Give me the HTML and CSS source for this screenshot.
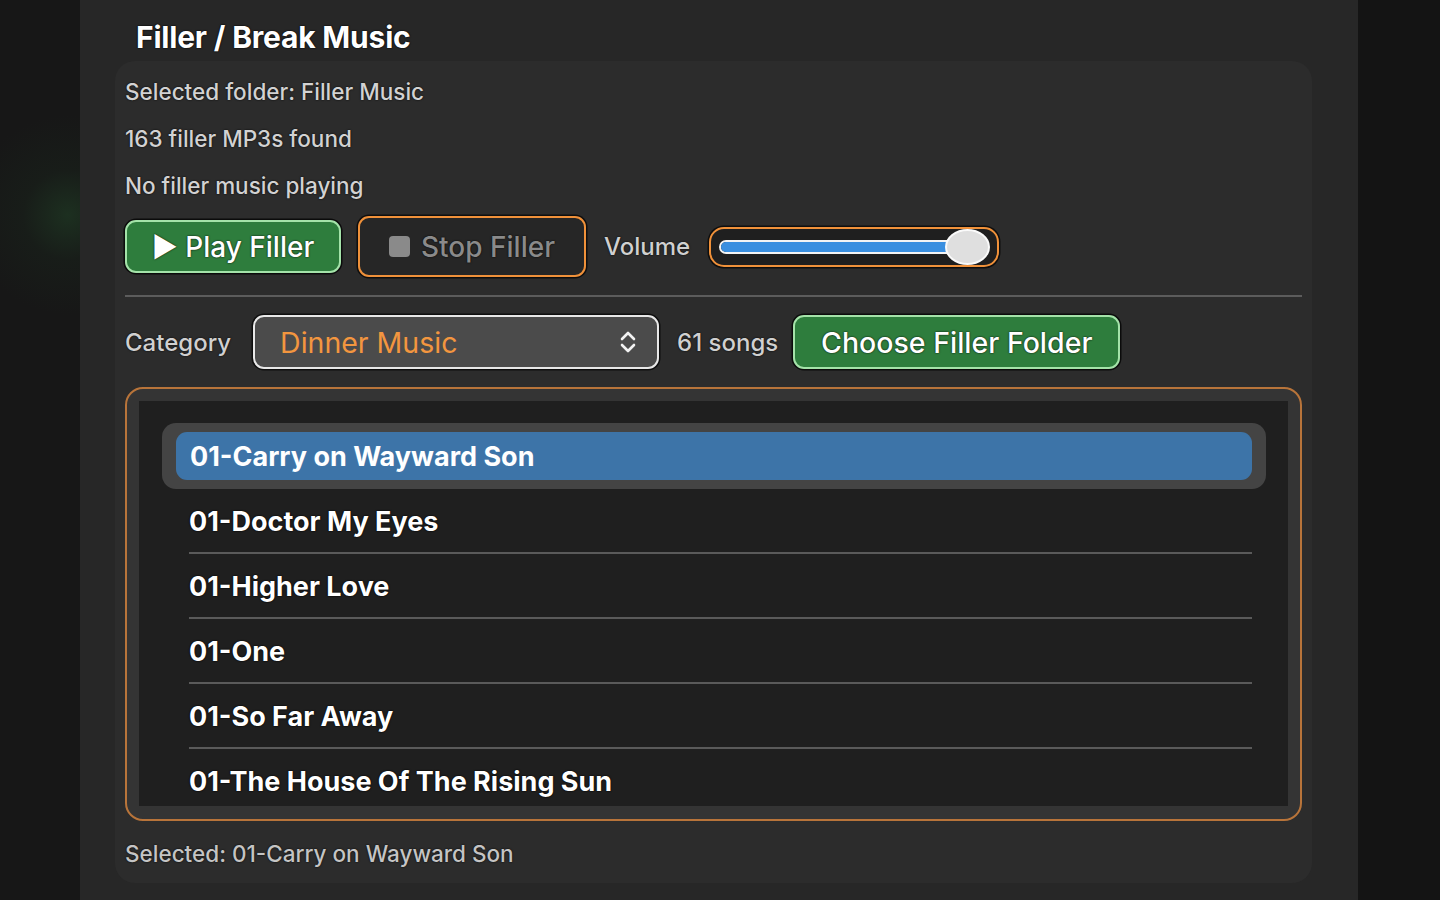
FILE: index.html
```html
<!DOCTYPE html>
<html lang="en">
<head>
  <meta charset="UTF-8">
  <title>Filler / Break Music</title>
  <link rel="stylesheet" href="styles.css">
</head>
<body>
  <div class="app">
    <div class="side side-left"></div>

    <main class="panel">
      <h2 class="title">Filler / Break Music</h2>

      <section class="card">
        <div class="info">
          <p>Selected folder: Filler Music</p>
          <p>163 filler MP3s found</p>
          <p>No filler music playing</p>
        </div>

        <div class="controls">
          <button class="btn btn-green btn-play">&#9654; Play Filler</button>
          <button class="btn btn-stop"><span class="stop-square"></span>Stop Filler</button>
          <span class="label">Volume</span>
          <div class="slider">
            <div class="track">
              <div class="fill" style="width: 94%"></div>
            </div>
            <div class="thumb"></div>
          </div>
        </div>

        <hr class="divider">

        <div class="category-row">
          <span class="label">Category</span>
          <div class="select">
            <span class="select-value">Dinner Music</span>
            <svg class="chevrons" width="18" height="26" viewBox="0 0 18 26">
              <path d="M3 10 L9 4 L15 10" fill="none" stroke="#f2f2f2" stroke-width="2.6" stroke-linecap="round" stroke-linejoin="round"/>
              <path d="M3 16 L9 22 L15 16" fill="none" stroke="#f2f2f2" stroke-width="2.6" stroke-linecap="round" stroke-linejoin="round"/>
            </svg>
          </div>
          <span class="label count">61 songs</span>
          <button class="btn btn-green btn-folder">Choose Filler Folder</button>
        </div>

        <div class="list">
          <ul class="songs" id="songs"></ul>
        </div>

        <p class="selected-label">Selected: 01-Carry on Wayward Son</p>
      </section>
    </main>

    <div class="side side-right"></div>
  </div>

  <script>
    const songs = [
      '01-Carry on Wayward Son',
      '01-Doctor My Eyes',
      '01-Higher Love',
      '01-One',
      '01-So Far Away',
      '01-The House Of The Rising Sun'
    ];
    const selected = 0;

    const list = document.getElementById('songs');
    songs.forEach((name, i) => {
      const li = document.createElement('li');
      if (i === selected) {
        li.className = 'song selected';
        const inner = document.createElement('span');
        inner.className = 'song-inner';
        inner.textContent = name;
        li.appendChild(inner);
      } else {
        li.className = 'song';
        li.textContent = name;
      }
      list.appendChild(li);
    });
  </script>
</body>
</html>
```

FILE: styles.css
```css
body {
  margin: 0;
  background-color: #141414;
  font-family: Inter, "Noto Sans", sans-serif;
  color: #fff;
}
.app {
  display: flex;
  height: 900px;
  overflow: hidden;
}
.side-left {
  width: 80px;
  flex-shrink: 0;
  background: radial-gradient(circle at 68px 215px, rgba(34, 72, 41, 0.5) 0, rgba(26, 42, 29, 0.3) 45px, rgba(22, 22, 22, 0) 100px), #171717;
}
.side-right {
  flex: 1;
  background-color: #141414;
}
.panel {
  width: 1278px;
  flex-shrink: 0;
  background-color: #272727;
  padding: 0 46px 0 35px;
  box-sizing: border-box;
}
.title {
  margin: 0;
  height: 61px;
  padding: 18px 0 0 21px;
  box-sizing: border-box;
  font-size: 30px;
  font-weight: 700;
  line-height: 38px;
  letter-spacing: -0.2px;
  text-shadow: 0 0 2px #000, 0 0 1px #000;
}
.card {
  height: 822px;
  background-color: #2c2c2c;
  border-radius: 20px;
  padding: 7px 10px 0 10px;
  box-sizing: border-box;
  display: flex;
  flex-direction: column;
}
.card > * {
  flex-shrink: 0;
}
.info p {
  margin: 0;
  line-height: 47px;
  font-size: 22.5px;
  font-weight: 500;
  color: #d2d2d2;
  text-shadow: 0 0 2px #000;
}
.controls {
  margin-top: 7px;
  height: 61px;
  display: flex;
  align-items: center;
}
.btn {
  font-family: inherit;
  font-size: 28px;
  font-weight: 500;
  border-radius: 11px;
  box-sizing: border-box;
  cursor: pointer;
  padding: 0;
  text-shadow: 0 0 2px #000;
}
.btn-green {
  background-color: #2e7d3d;
  border: 2px solid #a4e3a9;
  color: #fff;
  box-shadow: 0 0 0 1.5px #0b0b0b;
}
.btn-play {
  width: 216px;
  height: 53px;
}
.btn-stop {
  width: 228px;
  height: 61px;
  margin-left: 17px;
  background-color: #262626;
  border: 2px solid #f0913a;
  color: #8a8a8a;
  display: flex;
  align-items: center;
  justify-content: center;
  gap: 11px;
  box-shadow: 0 0 0 1.5px #0e0e0e;
}
.stop-square {
  width: 21px;
  height: 21px;
  border-radius: 4px;
  background-color: #8a8a8a;
}
.label {
  font-size: 24px;
  font-weight: 500;
  color: #d0d0d0;
  text-shadow: 0 0 2px #000;
}
.controls .label {
  margin-left: 18px;
}
.slider {
  position: relative;
  margin-left: 19px;
  width: 290px;
  height: 40px;
  border: 2px solid #f0913a;
  border-radius: 15px;
  box-sizing: border-box;
  background-color: #1f1f1f;
  box-shadow: 0 0 0 1.5px #0e0e0e;
}
.track {
  position: absolute;
  left: 8px;
  right: 28px;
  top: 11px;
  height: 14px;
  border: 2px solid #f4f4f4;
  border-radius: 8px;
  box-sizing: border-box;
  background-color: #2d2d2d;
  overflow: hidden;
}
.fill {
  height: 100%;
  background-color: #3a8fe0;
}
.thumb {
  position: absolute;
  left: 234px;
  top: 0;
  width: 45px;
  height: 36px;
  border-radius: 50%;
  background-color: #dfdfdf;
  border: 2px solid #fafafa;
  box-sizing: border-box;
}
.divider {
  margin: 18px 0 0 0;
  border: 0;
  height: 2px;
  background-color: #5c5c5c;
}
.category-row {
  margin-top: 18px;
  height: 54px;
  display: flex;
  align-items: center;
}
.select {
  margin-left: 22px;
  width: 406px;
  height: 54px;
  box-sizing: border-box;
  background-color: #4b4b4b;
  border: 2px solid #e8e8e8;
  border-radius: 11px;
  box-shadow: 0 0 0 1.5px #0e0e0e;
  display: flex;
  align-items: center;
  justify-content: space-between;
  padding: 0 20px 0 25px;
}
.select-value {
  font-size: 28.5px;
  color: #f3963f;
}
.count {
  margin-left: 18px;
}
.btn-folder {
  margin-left: 15px;
  width: 327px;
  height: 54px;
  font-size: 28.5px;
}
.list {
  margin-top: 18px;
  height: 434px;
  border: 2px solid #b8743a;
  border-radius: 18px;
  background-color: #343434;
  padding: 12px 12px 13px 12px;
  box-sizing: border-box;
}
.songs {
  list-style: none;
  margin: 0;
  padding: 0;
  height: 100%;
  background-color: #1f1f1f;
  overflow: hidden;
}
.song {
  margin: 0 36px 0 50px;
  height: 65px;
  line-height: 65px;
  border-bottom: 2px solid #5a5a5a;
  box-sizing: border-box;
  font-size: 27px;
  font-weight: 700;
  text-shadow: 0 0 2px #000, 0 0 1px #000;
  white-space: nowrap;
}
.song:last-child {
  border-bottom: 0;
}
.song.selected {
  margin: 22px 22px 0 23px;
  height: 66px;
  line-height: normal;
  border: 0;
  background-color: #444;
  border-radius: 14px;
  padding: 9px 14px;
  text-shadow: none;
}
.song-inner {
  display: block;
  height: 48px;
  line-height: 49px;
  background-color: #3d74a8;
  border-radius: 11px;
  padding-left: 14px;
}
.selected-label {
  margin: 0;
  padding-top: 4px;
  line-height: 58px;
  font-size: 22.5px;
  font-weight: 500;
  color: #c4c4c4;
  text-shadow: 0 0 2px #000;
}
```
